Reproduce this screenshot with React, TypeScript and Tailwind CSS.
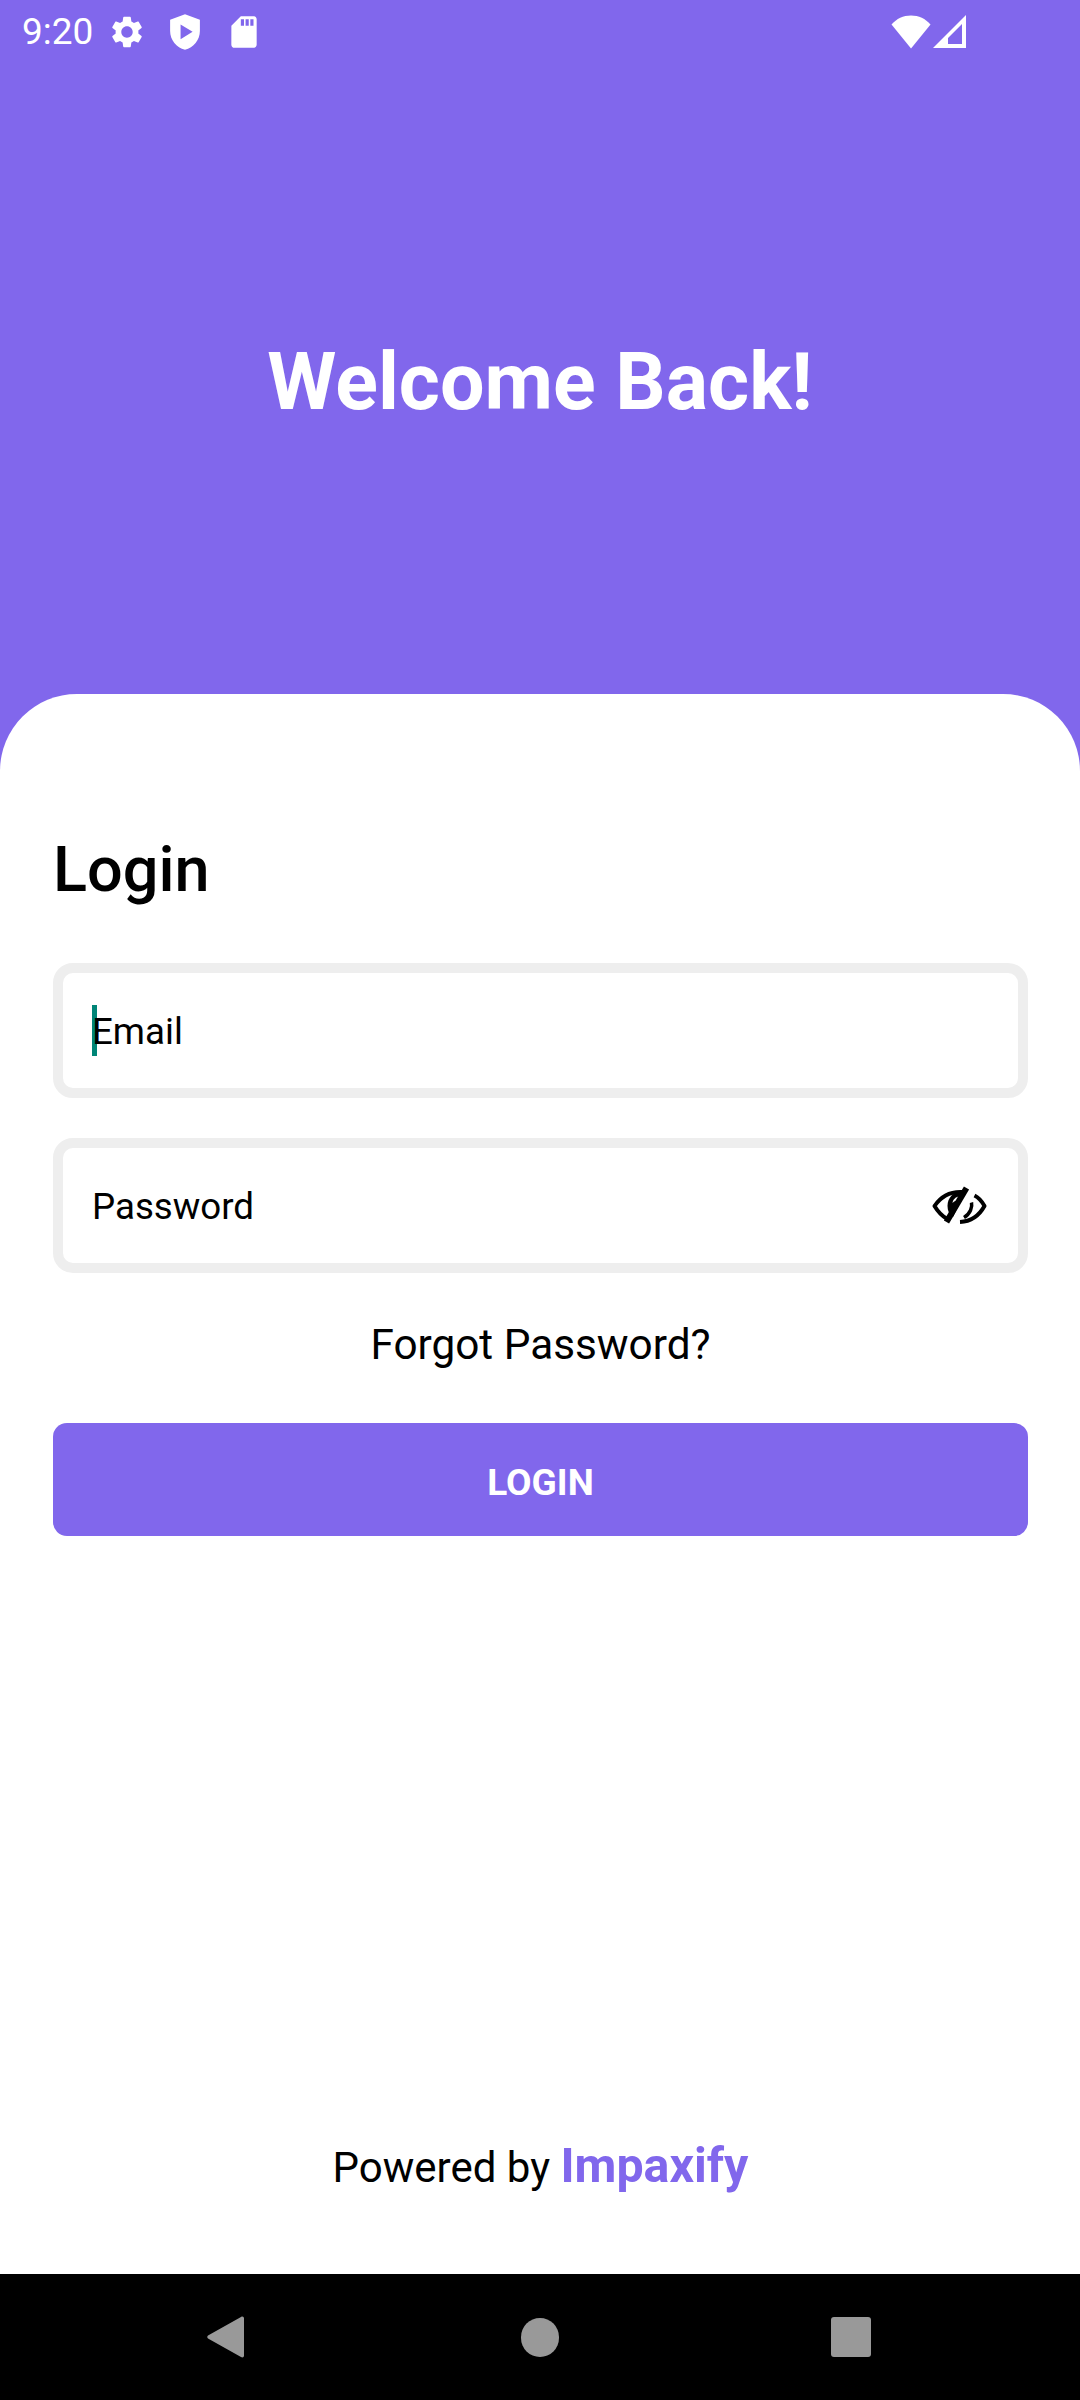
function StatusBar() {
  return (
    <div className="flex h-[63px] items-center justify-between pl-[22px] pr-[114px] text-white">
      <div className="flex items-center">
        <span className="text-[37px] leading-none font-normal">9:20</span>
        <svg className="ml-[15px] h-[38px] w-[38px]" viewBox="0 0 24 24" fill="currentColor">
          <path d="M19.14 12.94c.04-.3.06-.61.06-.94 0-.32-.02-.64-.07-.94l2.03-1.58c.18-.14.23-.41.12-.61l-1.92-3.32c-.12-.22-.37-.29-.59-.22l-2.39.96c-.5-.38-1.03-.7-1.62-.94l-.36-2.54c-.04-.24-.24-.41-.48-.41h-3.84c-.24 0-.43.17-.47.41l-.36 2.54c-.59.24-1.13.57-1.62.94l-2.39-.96c-.22-.08-.47 0-.59.22L2.74 8.87c-.12.21-.08.47.12.61l2.03 1.58c-.05.3-.09.63-.09.94s.02.64.07.94l-2.03 1.58c-.18.14-.23.41-.12.61l1.92 3.32c.12.22.37.29.59.22l2.39-.96c.5.38 1.03.7 1.62.94l.36 2.54c.05.24.24.41.48.41h3.84c.24 0 .44-.17.47-.41l.36-2.54c.59-.24 1.13-.56 1.62-.94l2.39.96c.22.08.47 0 .59-.22l1.92-3.32c.12-.22.07-.47-.12-.61l-2.01-1.58zM12 15.6c-1.98 0-3.6-1.62-3.6-3.6s1.62-3.6 3.6-3.6 3.6 1.62 3.6 3.6-1.62 3.6-3.6 3.6z" />
        </svg>
        <svg className="ml-[20px] h-[38px] w-[38px]" viewBox="0 0 24 24" fill="currentColor">
          <path fillRule="evenodd" d="M12 .8 2.6 4.2v7.1c0 5.6 4 10.6 9.4 11.9 5.4-1.3 9.4-6.3 9.4-11.9V4.200L12 .8zM9.200 7.200v9.400l7.600-4.700-7.600-4.700z" />
        </svg>
        <svg className="ml-[21px] h-[38px] w-[38px]" viewBox="0 0 24 24" fill="currentColor">
          <path d="M18 2h-8L4.02 8 4 20c0 1.1.9 2 2 2h12c1.1 0 2-.9 2-2V4c0-1.1-.9-2-2-2zm-6 6h-2V4h2v4zm3 0h-2V4h2v4zm3 0h-2V4h2v4z" />
        </svg>
      </div>
      <div className="flex items-center">
        <svg className="h-[34px] w-[40px]" viewBox="0 0 40 34" fill="currentColor">
          <path d="M0.500 9.500C5.500 3.700 12.300 0.500 20 0.500s14.500 3.200 19.500 9L20 33.500z" />
        </svg>
        <svg className="ml-[2px] h-[34px] w-[33px]" viewBox="0 0 33 34" fill="currentColor">
          <path fillRule="evenodd" d="M0 33 33 0v33H0zM15 29h14V9L15 23v6z" />
        </svg>
      </div>
    </div>
  );
}

function EyeOffIcon() {
  return (
    <svg className="h-[48px] w-[56px]" viewBox="0 0 56 48" fill="none">
      {/* left half: outline, iris and its highlight */}
      <path d="M31 10C19 9.500 9.500 15 3.500 24 6.500 29 10.500 33.500 15.500 36.500" stroke="#000" strokeWidth="4" strokeLinejoin="round" />
      <path d="M31 9.500C22 9.500 16.500 16 16.500 24c0 5 2 9 5.500 11.500L33 12z" fill="#000" />
      <path d="M28 14.500c-3.500.500-6 3-6.500 6.500 2-2 4-3 6.500-2.800z" fill="#fff" />
      {/* slash with white gap on its right */}
      <path d="M38.500 8 22 40" stroke="#fff" strokeWidth="4" />
      <path d="M35.500 6 15.500 40" stroke="#000" strokeWidth="6" />
      {/* right half */}
      <path d="M43.500 13.500C47.500 15.500 51 19.500 53.500 24 48.500 33 40 39.500 29 40" stroke="#000" strokeWidth="4" strokeLinejoin="round" />
      <path d="M40.500 20.500c1 4.500-1 11-7.500 15" stroke="#000" strokeWidth="3.500" />
    </svg>
  );
}

function Field({ label, caret, icon }: { label: string; caret?: boolean; icon?: boolean }) {
  return (
    <div className="flex h-[135px] items-center rounded-[20px] border-[10px] border-[#eeeeee] bg-white pl-[29px] pr-[31px]">
      {caret && <span className="-mr-[5px] h-[51px] w-[5px] bg-[#008577]" />}
      <span className="mt-[3px] flex-1 text-[36.7px] leading-none text-black">{label}</span>
      {icon && <EyeOffIcon />}
    </div>
  );
}

export default function App() {
  return (
    <div className="flex h-[2400px] w-[1080px] flex-col overflow-hidden bg-[#8167ec] font-['Roboto',sans-serif]">
      {/* purple header */}
      <StatusBar />
      <div className="flex h-[631px] items-center justify-center pt-[7px]">
        <h1 className="text-[79px] leading-none font-bold text-white">Welcome Back!</h1>
      </div>

      {/* login card */}
      <div className="flex flex-1 flex-col rounded-t-[77px] bg-white pl-[53px] pr-[52px]">
        <h2 className="mt-[143px] text-[63px] leading-[66px] font-medium text-black">Login</h2>
        <div className="mt-[60px] flex flex-col gap-[40px]">
          <Field label="Email" caret />
          <Field label="Password" icon />
        </div>
        <p className="mt-[46px] text-center text-[42.3px] leading-[52px] text-black">Forgot Password?</p>
        <button className="mt-[52px] h-[113px] rounded-[14px] bg-[#8167ec] pt-[6px] text-[37px] font-bold text-white">LOGIN</button>
        <p className="mt-auto mb-[76px] text-center text-[42px] leading-[60px] text-black">
          Powered by <span className="text-[48.3px] font-bold text-[#8167ec]">Impaxify</span>
        </p>
      </div>

      {/* nav bar */}
      <div className="flex h-[126px] items-center bg-black pl-[207px]">
        <svg className="h-[42px] w-[37px]" viewBox="0 0 37 42" fill="#999999">
          <path d="M34 1c1.500-1 3-.3 3 1.500v37c0 1.800-1.500 2.500-3 1.500L1 22.500c-1-.8-1-2.200 0-3z" />
        </svg>
        <span className="ml-[277px] h-[39px] w-[38px] rounded-full bg-[#999999]" />
        <span className="ml-[272px] h-[40px] w-[40px] rounded-[3px] bg-[#999999]" />
      </div>
    </div>
  );
}
